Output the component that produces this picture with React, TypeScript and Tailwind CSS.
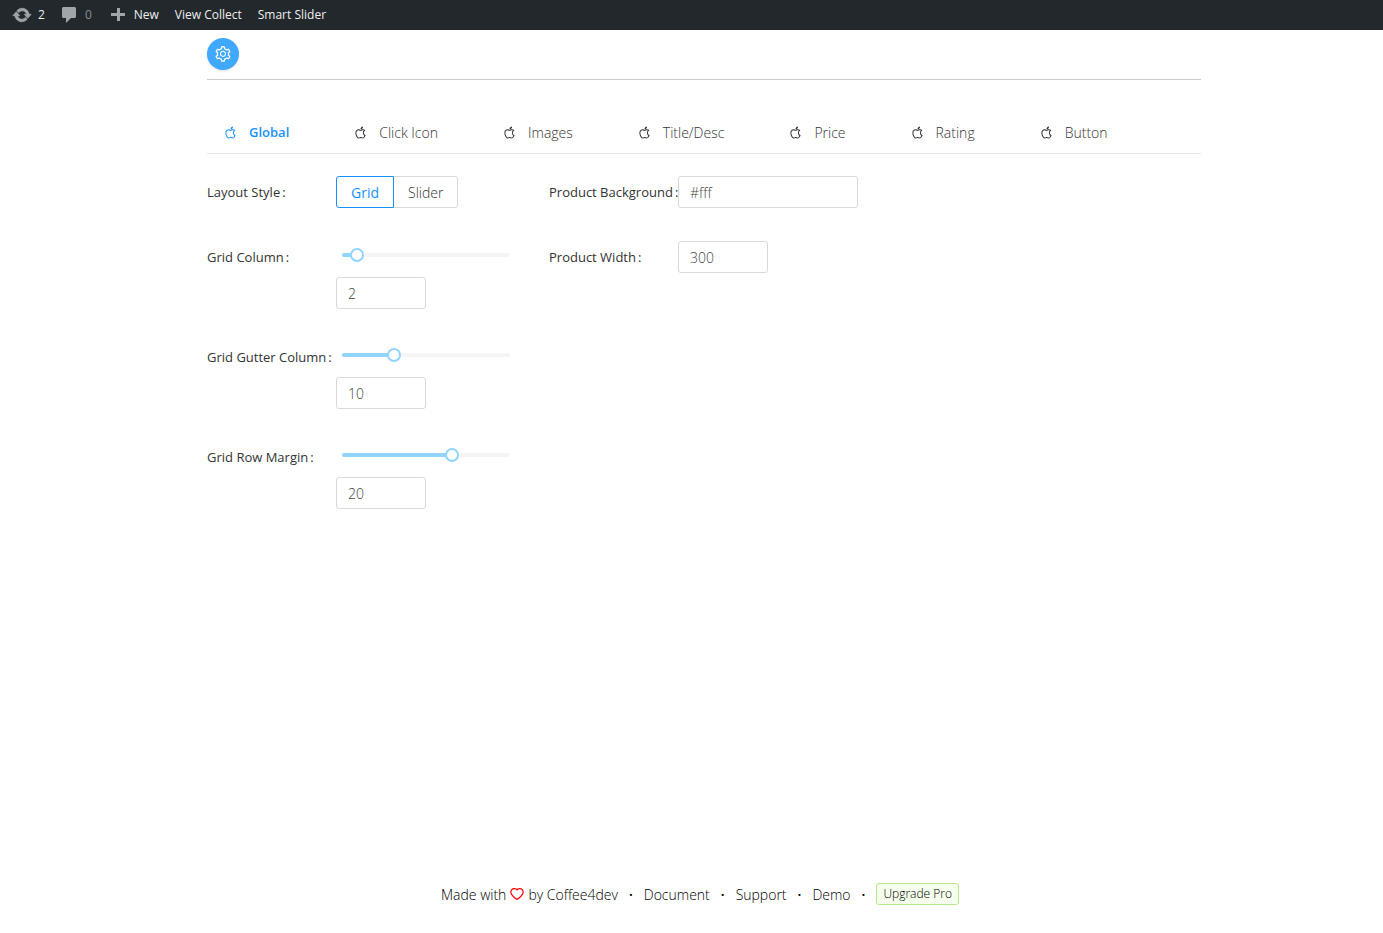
import React, { useState } from 'react';
import { AiOutlineApple, AiOutlineHeart, AiOutlineSetting } from 'react-icons/ai';

const tabs = ['Global', 'Click Icon', 'Images', 'Title/Desc', 'Price', 'Rating', 'Button'];

const inputClass =
  'h-8 rounded-[3px] border border-[#d9d9d9] bg-white px-[11px] font-light text-[#444] outline-none focus:border-[#40a9ff]';

type FieldProps = { label: string; htmlFor?: string; children: React.ReactNode };

const Field = ({ label, htmlFor, children }: FieldProps) => (
  <div className="flex items-start">
    <label htmlFor={htmlFor} className="w-[129px] shrink-0 whitespace-nowrap text-[13px] leading-8 font-normal text-[#333]">
      {label}
      <span className="ml-[2px]">:</span>
    </label>
    <div className="min-w-0 flex-1">{children}</div>
  </div>
);

type SliderFieldProps = { id: string; label: string; initial: number; max: number };

const SliderField = ({ id, label, initial, max }: SliderFieldProps) => {
  const [value, setValue] = useState(initial);
  const percent = ((value - 1) / (max - 1)) * 100;

  return (
    <Field label={label} htmlFor={id}>
      <div className="relative mr-[7px] ml-[6px] flex h-7 items-center">
        <div className="h-1 w-full rounded-sm bg-[#f5f5f5]">
          <div className="h-1 rounded-sm bg-[#91d5ff]" style={{ width: `${percent}%` }}></div>
        </div>
        {/* the range is one thumb wider than the rail so the thumb centre meets its ends */}
        <input
          type="range"
          aria-label={label}
          min={1}
          max={max}
          value={value}
          onChange={(e) => setValue(Number(e.target.value))}
          className="absolute inset-y-0 -left-[7px] w-[calc(100%+14px)] cursor-pointer appearance-none bg-transparent outline-none [&::-webkit-slider-thumb]:h-[14px] [&::-webkit-slider-thumb]:w-[14px] [&::-webkit-slider-thumb]:appearance-none [&::-webkit-slider-thumb]:rounded-full [&::-webkit-slider-thumb]:border-2 [&::-webkit-slider-thumb]:border-solid [&::-webkit-slider-thumb]:border-[#91d5ff] [&::-webkit-slider-thumb]:bg-white"
        />
      </div>
      <input
        id={id}
        type="text"
        value={value}
        onChange={(e) => setValue(Number(e.target.value) || 1)}
        className={`${inputClass} mt-2 block w-[90px]`}
      />
    </Field>
  );
};

const AdminBar = () => (
  <nav className="flex h-[30px] items-center bg-[#23282d] pl-3 text-[12px] font-medium text-[#eee]">
    <a href="#updates" className="flex items-center">
      <svg viewBox="0 0 20 20" className="mr-[6px] h-5 w-5 fill-[#a0a5aa] stroke-[#a0a5aa]" strokeWidth="0.7">
        <path d="M10.2 3.28c3.53 0 6.43 2.61 6.92 6h2.08l-3.5 4-3.5-4h2.32c-.45-1.97-2.21-3.45-4.32-3.45-1.45 0-2.73.71-3.54 1.78L4.95 5.66C6.23 4.2 8.11 3.28 10.2 3.28zm-.4 13.44c-3.52 0-6.43-2.61-6.92-6H.8l3.5-4c1.17 1.33 2.33 2.67 3.5 4H5.48c.45 1.97 2.21 3.45 4.32 3.45 1.45 0 2.73-.71 3.54-1.78l1.71 1.95c-1.28 1.46-3.15 2.38-5.25 2.38z" />
      </svg>
      2
    </a>
    <a href="#comments" className="ml-[14px] flex items-center text-[#8b8f93]">
      <svg viewBox="0 0 20 20" className="mr-[6px] h-5 w-5 fill-[#a0a5aa]">
        <path d="M4.500 2h11c.8 0 1.500.7 1.500 1.500v8c0 .8-.7 1.500-1.500 1.500H12l-5 5v-5H4.500C3.700 13 3 12.300 3 11.500v-8C3 2.700 3.700 2 4.500 2z" />
      </svg>
      0
    </a>
    <a href="#new" className="ml-4 flex items-center">
      <svg viewBox="0 0 20 20" className="mr-[6px] h-5 w-5 fill-[#a0a5aa]">
        <path d="M17 8v3h-5v5H9v-5H3V8h6V3h3v5h5z" />
      </svg>
      New
    </a>
    <a href="#collect" className="ml-4">View Collect</a>
    <a href="#slider" className="ml-4">Smart Slider</a>
  </nav>
);

const Dot = () => <span className="mx-[11px] font-semibold">·</span>;

const App: React.FC = () => {
  const [activeTab, setActiveTab] = useState('Global');
  const [layout, setLayout] = useState('Grid');
  const [background, setBackground] = useState('#fff');
  const [width, setWidth] = useState('300');

  return (
    <div className="flex min-h-screen flex-col bg-white font-['Open_Sans',sans-serif] text-[14px] font-light text-black">
      <AdminBar />

      <div className="flex flex-1 flex-col pr-[182px] pl-[207px]">
        <header className="border-b border-[#ccc] pt-2 pb-[9px]">
          <button
            aria-label="Settings"
            className="flex h-8 w-8 items-center justify-center rounded-full bg-[#40a9ff] text-white shadow-sm"
          >
            <AiOutlineSetting className="h-[18px] w-[18px]" />
          </button>
        </header>

        <div role="tablist" className="mt-8 flex border-b border-[#e8e8e8]">
          {tabs.map((tab) => (
            <button
              key={tab}
              role="tab"
              aria-selected={activeTab === tab}
              onClick={() => setActiveTab(tab)}
              className={`mr-8 flex h-[41px] cursor-pointer items-center px-4 ${activeTab === tab ? 'text-[13px] font-semibold text-[#1890ff]' : 'text-[#333]'}`}
            >
              <AiOutlineApple className="mr-[11px] h-[15px] w-[15px]" />
              {tab}
            </button>
          ))}
        </div>

        <main className="mt-[22px] grid grid-cols-3 gap-x-8">
          <div className="flex flex-col gap-8">
            <Field label="Layout Style">
              <div className="flex h-[33px]">
                {['Grid', 'Slider'].map((name) => (
                  <label
                    key={name}
                    className={`flex h-8 cursor-pointer items-center border px-[14px] first:rounded-l-[3px] last:-ml-px last:rounded-r-[3px] ${layout === name ? 'z-10 border-[#1890ff] font-normal text-[#1890ff]' : 'border-[#d9d9d9] text-[#333]'}`}
                  >
                    <input
                      type="radio"
                      name="layout"
                      checked={layout === name}
                      onChange={() => setLayout(name)}
                      className="sr-only"
                    />
                    {name}
                  </label>
                ))}
              </div>
            </Field>
            <SliderField id="grid-column" label="Grid Column" initial={2} max={12} />
            <SliderField id="grid-gutter" label="Grid Gutter Column" initial={10} max={30} />
            <SliderField id="grid-margin" label="Grid Row Margin" initial={20} max={30} />
          </div>

          <div className="flex flex-col gap-8">
            <Field label="Product Background" htmlFor="product-background">
              <div className="h-[33px]">
                <input
                  id="product-background"
                  type="text"
                  value={background}
                  onChange={(e) => setBackground(e.target.value)}
                  className={`${inputClass} relative block w-[180px]`}
                />
              </div>
            </Field>
            <Field label="Product Width" htmlFor="product-width">
              <input
                id="product-width"
                type="text"
                value={width}
                onChange={(e) => setWidth(e.target.value)}
                className={`${inputClass} block w-[90px]`}
              />
            </Field>
          </div>
        </main>

        <footer className="mt-auto flex items-center justify-center pr-2 pb-7">
          <span className="flex items-center">
            Made with
            <AiOutlineHeart className="mx-[3px] h-4 w-4 text-[#f00]" />
            by Coffee4dev
          </span>
          <Dot />
          <a href="#document">Document</a>
          <Dot />
          <a href="#support">Support</a>
          <Dot />
          <a href="#demo">Demo</a>
          <Dot />
          <a
            href="#upgrade"
            className="flex h-[22px] items-center rounded-[3px] border border-[#b7eb8f] bg-[#f6ffed] px-[6px] text-[12px]"
          >
            Upgrade Pro
          </a>
        </footer>
      </div>
    </div>
  );
};

export default App;
